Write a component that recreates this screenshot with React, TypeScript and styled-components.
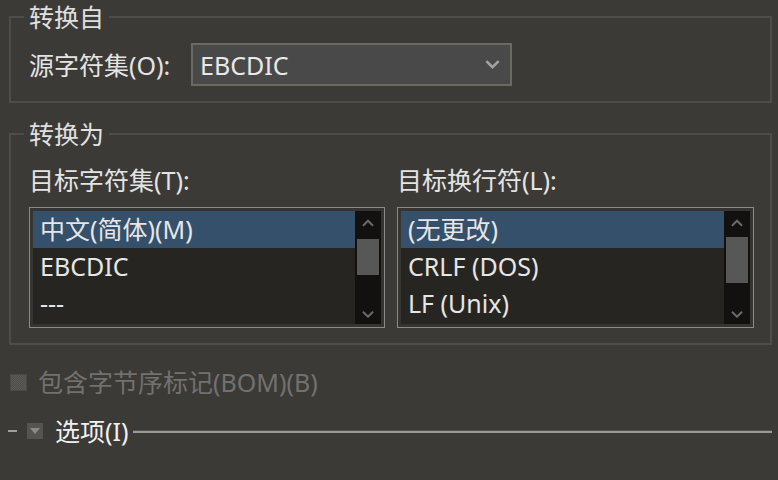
import styled, { createGlobalStyle } from 'styled-components';

const GlobalStyle = createGlobalStyle`
  html, body {
    margin: 0;
    padding: 0;
    background: #3c3a36;
  }
  body {
    font-family: "Noto Sans", "Noto Sans CJK SC", sans-serif;
    font-size: 25px;
    color: #e4e4e4;
  }
`;

const Page = styled.div`
  width: 778px;
  height: 480px;
  box-sizing: border-box;
  padding: 3px 6px 0 9px;
  background: #3c3a36;
  overflow: hidden;
`;

const GroupBox = styled.fieldset<{ $top?: number }>`
  margin: ${(p) => p.$top ?? 0}px 0 0 0;
  padding: ${(p) => (p.$top ? 18 : 12)}px 16px 15px 18px;
  border: 2px solid #4f4d49;
  min-width: 0;
`;

const Legend = styled.legend`
  margin-left: -5px;
  padding: 0 5px;
  line-height: 28px;
  color: #e0e0e0;
`;

const Row = styled.div`
  display: flex;
  align-items: center;
  gap: 13px;
`;

const Label = styled.span<{ $width?: number }>`
  line-height: 28px;
  white-space: nowrap;
  min-width: ${(p) => (p.$width ? `${p.$width}px` : 'auto')};
`;

const Combo = styled.div`
  width: 321px;
  height: 43px;
  box-sizing: border-box;
  border: 2px solid #6b6a61;
  background: #494949;
  display: flex;
  align-items: center;
  justify-content: space-between;
  padding: 0 9px 0 7px;
  color: #e8e8e8;
`;

const Columns = styled.div`
  display: grid;
  grid-template-columns: 356px 357px;
  gap: 12px;
`;

const Column = styled.div`
  display: flex;
  flex-direction: column;
  gap: 13px;
`;

const ListBox = styled.div`
  height: 121px;
  box-sizing: border-box;
  border: 1px solid #8a8a8a;
  padding: 3px;
  background: #353431;
  display: flex;
`;

const Items = styled.div`
  flex: 1;
  background: #272522;
  overflow: hidden;
`;

const Item = styled.div<{ $selected?: boolean }>`
  height: 37px;
  line-height: 37px;
  padding-left: 7px;
  background: ${(p) => (p.$selected ? '#35506a' : 'transparent')};
  color: #e6e6e6;
  white-space: nowrap;
`;

const ScrollBar = styled.div`
  width: 26px;
  background: #121110;
  display: flex;
  flex-direction: column;
  align-items: center;
  padding: 8px 0 6px;
  box-sizing: border-box;
`;

const Thumb = styled.div<{ $h: number; $t: number }>`
  width: 22px;
  height: ${(p) => p.$h}px;
  margin-top: ${(p) => p.$t}px;
  background: #575757;
`;

const Spacer = styled.div`
  flex: 1;
`;

const CheckRow = styled.div`
  display: flex;
  align-items: center;
  gap: 11px;
  margin: 23px 0 0 1px;
  line-height: 28px;
  color: #727170;
`;

const CheckBox = styled.div`
  width: 17px;
  height: 17px;
  background: repeating-conic-gradient(#4e4d4a 0 25%, #5c5b57 0 50%) 0 0 / 2px 2px;
  border: 1px solid #4a4946;
  box-sizing: border-box;
`;

const OptionsRow = styled.div`
  display: flex;
  align-items: center;
  margin: 21px 0 0 -1px;
  line-height: 28px;
`;

const Dash = styled.div`
  width: 9px;
  height: 2px;
  background: #a0a0a0;
  margin-right: 10px;
`;

const ToggleIcon = styled.div`
  width: 16px;
  height: 16px;
  background: #545451;
  display: flex;
  align-items: center;
  justify-content: center;
  margin-right: 12px;
`;

const OptionsText = styled.span`
  color: #f0f0f0;
  margin-right: 5px;
`;

const Rule = styled.div`
  flex: 1;
  height: 3px;
  border-top: 1px solid #555452;
  background: #9a9a9a;
  background-clip: content-box;
  box-sizing: border-box;
`;

const Chevron = ({ up, color, size }: { up?: boolean; color: string; size: number }) => (
  <svg width={size} height={size * 0.6} viewBox="0 0 16 10">
    <path
      d={up ? 'M2 8 L8 2 L14 8' : 'M2 2 L8 8 L14 2'}
      fill="none"
      stroke={color}
      strokeWidth="2.4"
    />
  </svg>
);

function List({ items, thumb }: { items: string[]; thumb: [number, number] }) {
  return (
    <ListBox>
      <Items>
        {items.map((t, i) => (
          <Item key={t} $selected={i === 0}>
            {t}
          </Item>
        ))}
      </Items>
      <ScrollBar>
        <Chevron up color="#6a6a6a" size={14} />
        <Thumb $t={thumb[0]} $h={thumb[1]} />
        <Spacer />
        <Chevron color="#6a6a6a" size={14} />
      </ScrollBar>
    </ListBox>
  );
}

export default function App() {
  return (
    <Page>
      <GlobalStyle />
      <GroupBox>
        <Legend>转换自</Legend>
        <Row>
          <Label $width={149}>源字符集(O):</Label>
          <Combo>
            <span>EBCDIC</span>
            <Chevron color="#a3a3a3" size={17} />
          </Combo>
        </Row>
      </GroupBox>
      <GroupBox $top={17}>
        <Legend>转换为</Legend>
        <Columns>
          <Column>
            <Label>目标字符集(T):</Label>
            <List items={['中文(简体)(M)', 'EBCDIC', '---']} thumb={[12, 36]} />
          </Column>
          <Column>
            <Label>目标换行符(L):</Label>
            <List items={['(无更改)', 'CRLF (DOS)', 'LF (Unix)']} thumb={[10, 46]} />
          </Column>
        </Columns>
      </GroupBox>
      <CheckRow>
        <CheckBox />
        <span>包含字节序标记(BOM)(B)</span>
      </CheckRow>
      <OptionsRow>
        <Dash />
        <ToggleIcon>
          <svg width="10" height="6" viewBox="0 0 10 6">
            <path d="M0 0 H10 L5 6 Z" fill="#8a8a88" />
          </svg>
        </ToggleIcon>
        <OptionsText>选项(I)</OptionsText>
        <Rule />
      </OptionsRow>
    </Page>
  );
}
